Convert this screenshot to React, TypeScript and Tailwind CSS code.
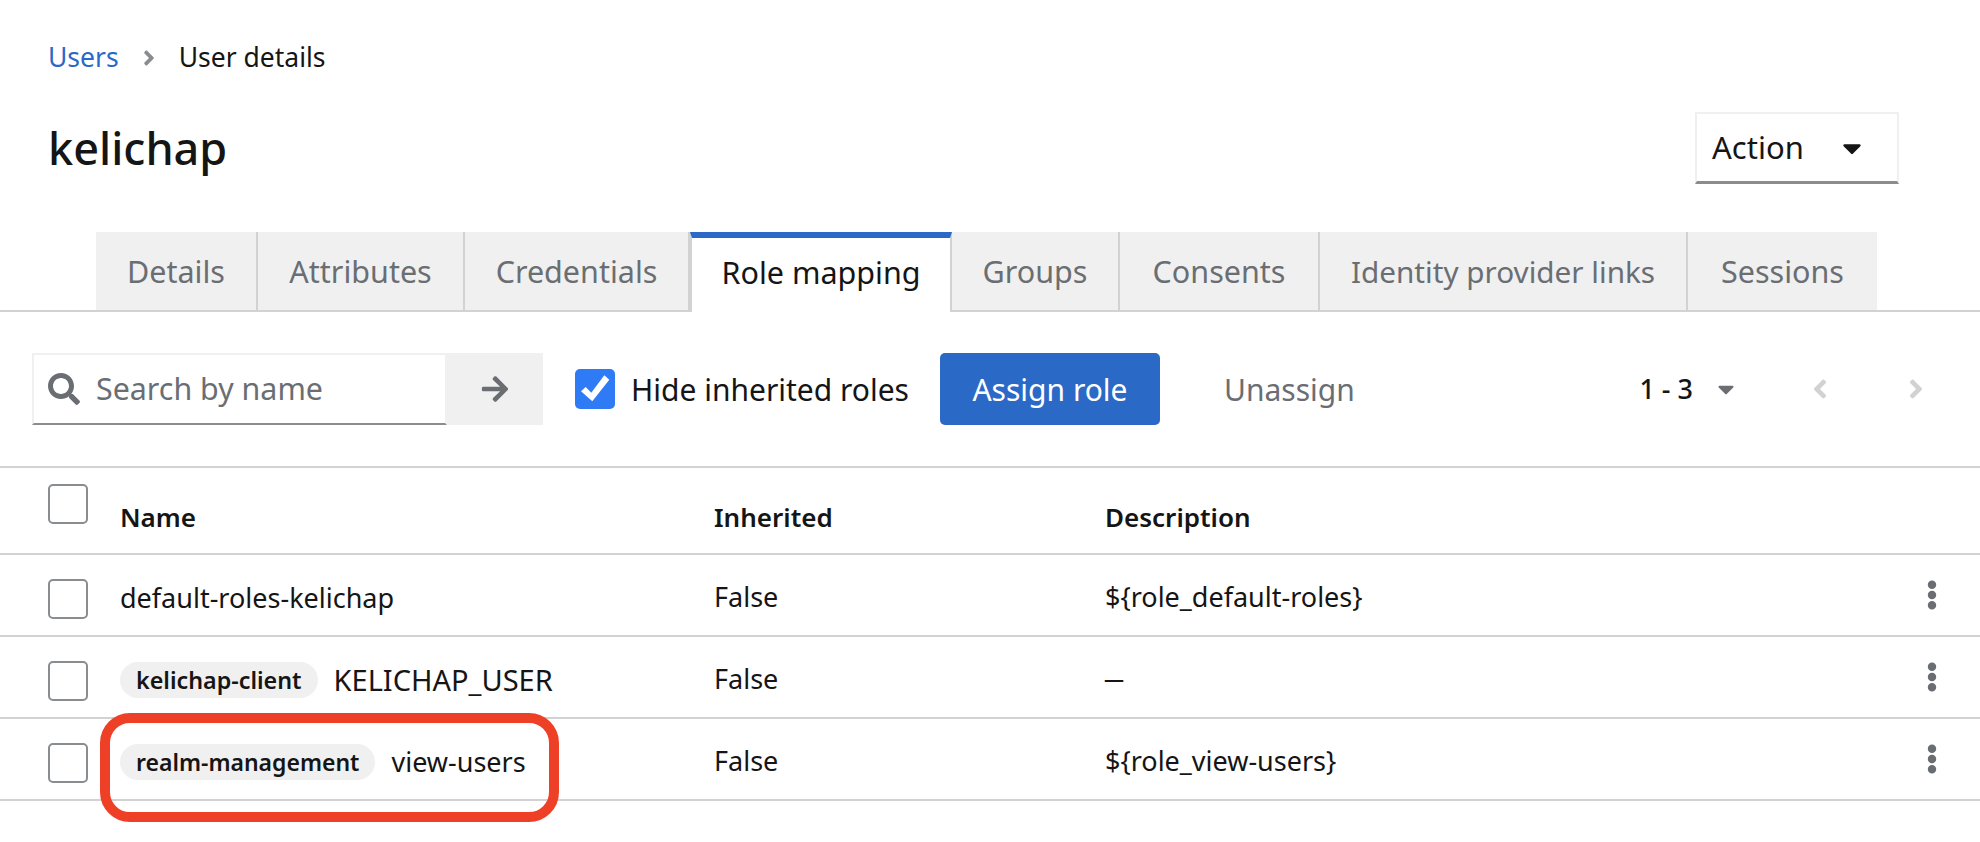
import { FaAngleLeft, FaAngleRight, FaArrowRight, FaCaretDown, FaEllipsisV, FaSearch } from 'react-icons/fa'

const tabs = [
  { label: 'Details', width: 'w-[162px]' },
  { label: 'Attributes', width: 'w-[207px]' },
  { label: 'Credentials', width: 'w-[225px]' },
  { label: 'Role mapping', width: 'w-[262px]', active: true },
  { label: 'Groups', width: 'w-[168px]' },
  { label: 'Consents', width: 'w-[200px]' },
  { label: 'Identity provider links', width: 'w-[368px] text-[29.7px]' },
  { label: 'Sessions', width: 'w-[189px]', last: true },
]

const rows = [
  { client: '', clientSize: '', name: 'default-roles-kelichap', description: '${role_default-roles}' },
  { client: 'kelichap-client', clientSize: 'text-[23.3px]', name: 'KELICHAP_USER', description: '—' },
  { client: 'realm-management', clientSize: 'text-[23px]', name: 'view-users', description: '${role_view-users}' },
]

function Checkbox() {
  return <div className="h-10 w-10 flex-shrink-0 rounded-[5px] border-2 border-[#8a8d90] bg-white" />
}

export default function App() {
  return (
    <div className="relative h-[842px] w-[1980px] overflow-hidden bg-white font-['Noto_Sans',sans-serif] text-[27px] text-[#151515]">
      {/* Breadcrumb */}
      <div className="flex h-[112px] items-center px-12 pt-[4px] text-[26.5px]">
        <span className="text-[#2a69c6]">Users</span>
        <FaAngleRight className="mx-[18px] text-[24px] text-[#8a8d90]" />
        <span>User details</span>
      </div>

      {/* Title */}
      <div className="flex h-[120px] items-start justify-between pl-12 pr-[81px]">
        <h1 className="text-[45px] font-medium leading-[72px]">kelichap</h1>
        <div className="flex h-[72px] w-[204px] items-center justify-between border-2 border-b-[3px] border-[#f0f0f0] border-b-[#8a8d90] pl-[15px] pr-[30px] text-[31px]">
          <span>Action</span>
          <FaCaretDown className="text-[30px]" />
        </div>
      </div>

      {/* Tabs */}
      <div className="flex h-[80px] border-b-2 border-[#d2d2d2] pl-[96px] text-[30.5px]">
        {tabs.map((tab) => (
          <div
            key={tab.label}
            className={
              tab.active
                ? `${tab.width} -mb-[2px] flex h-[80px] items-center justify-center border-x-2 border-t-[6px] border-[#d2d2d2] border-t-[#2a69c6] bg-white pb-[4px]`
                : `${tab.width} flex h-[78px] items-center justify-center bg-[#f0f0f0] pt-[2px] text-[#6a6e73] ${tab.last ? '' : 'border-r-2 border-[#d2d2d2]'}`
            }
          >
            {tab.label}
          </div>
        ))}
      </div>

      {/* Toolbar */}
      <div className="flex h-[154px] items-center pl-8 pr-[49px] text-[30px]">
        <div className="flex h-[72px] w-[415px] items-center gap-[16px] border-2 border-b-[2px] border-[#f0f0f0] border-b-[#8a8d90] pl-[14px]">
          <FaSearch className="text-[32px] text-[#6a6e73]" />
          <span className="text-[30.4px] text-[#6a6e73]">Search by name</span>
        </div>
        <div className="flex h-[72px] w-[96px] items-center justify-center bg-[#f0f0f0]">
          <FaArrowRight className="text-[30px] text-[#6a6e73]" />
        </div>
        <div className="ml-[32px] h-10 w-10 rounded-[5px] bg-[#2f7bf6]">
          <svg viewBox="0 0 40 40" className="h-10 w-10 fill-white">
            <polygon points="6,22.3 10.7,18 16.3,23.7 29.3,6.3 34.3,10.7 17.3,32.3" />
          </svg>
        </div>
        <span className="ml-[16px]">Hide inherited roles</span>
        <div className="ml-[31px] flex h-[72px] w-[220px] items-center justify-center rounded-[5px] bg-[#2a69c6] text-white">
          Assign role
        </div>
        <span className="ml-[64px] text-[#6a6e73]">Unassign</span>
        <div className="ml-auto flex items-center">
          <span className="text-[27px] font-medium">1 - 3</span>
          <FaCaretDown className="ml-[20px] text-[26px] text-[#6a6e73]" />
          <FaAngleLeft className="ml-[66px] text-[30px] text-[#d2d2d2]" />
          <FaAngleRight className="ml-[66px] text-[30px] text-[#d2d2d2]" />
        </div>
      </div>

      {/* Table */}
      <div className="border-t-2 border-[#d2d2d2]">
        <div className="grid h-[87px] grid-cols-[120px_594px_391px_1fr] border-b-2 border-[#d2d2d2] text-[26px] font-semibold">
          <div className="pl-12 pt-[16px]">
            <Checkbox />
          </div>
          <div className="pt-[30px]">Name</div>
          <div className="pt-[30px]">Inherited</div>
          <div className="pt-[30px]">Description</div>
        </div>
        {rows.map((row) => (
          <div
            key={row.name}
            className="grid h-[82px] grid-cols-[120px_594px_391px_1fr_96px] items-center border-b-2 border-[#d2d2d2]"
          >
            <div className="pl-12 pt-[8px]">
              <Checkbox />
            </div>
            <div className="flex items-center gap-[16px] pt-[6px]">
              {row.client && (
                <span className={`flex h-9 items-center rounded-full bg-[#f0f0f0] px-4 font-semibold ${row.clientSize}`}>
                  {row.client}
                </span>
              )}
              <span className={row.name === 'KELICHAP_USER' ? 'text-[29px]' : ''}>{row.name}</span>
            </div>
            <div className="pt-[4px]">False</div>
            <div className={row.description === '—' ? '-ml-[1px] pt-[4px] text-[20px] font-semibold' : 'pt-[4px]'}>
              {row.description}
            </div>
            <div className="flex justify-center">
              <FaEllipsisV className="text-[30px] text-[#6a6e73]" />
            </div>
          </div>
        ))}
      </div>

      {/* Annotation around the last row */}
      <div className="absolute left-[100px] top-[713px] h-[109px] w-[459px] rounded-[30px] border-[10px] border-[#ee4027]" />
    </div>
  )
}
